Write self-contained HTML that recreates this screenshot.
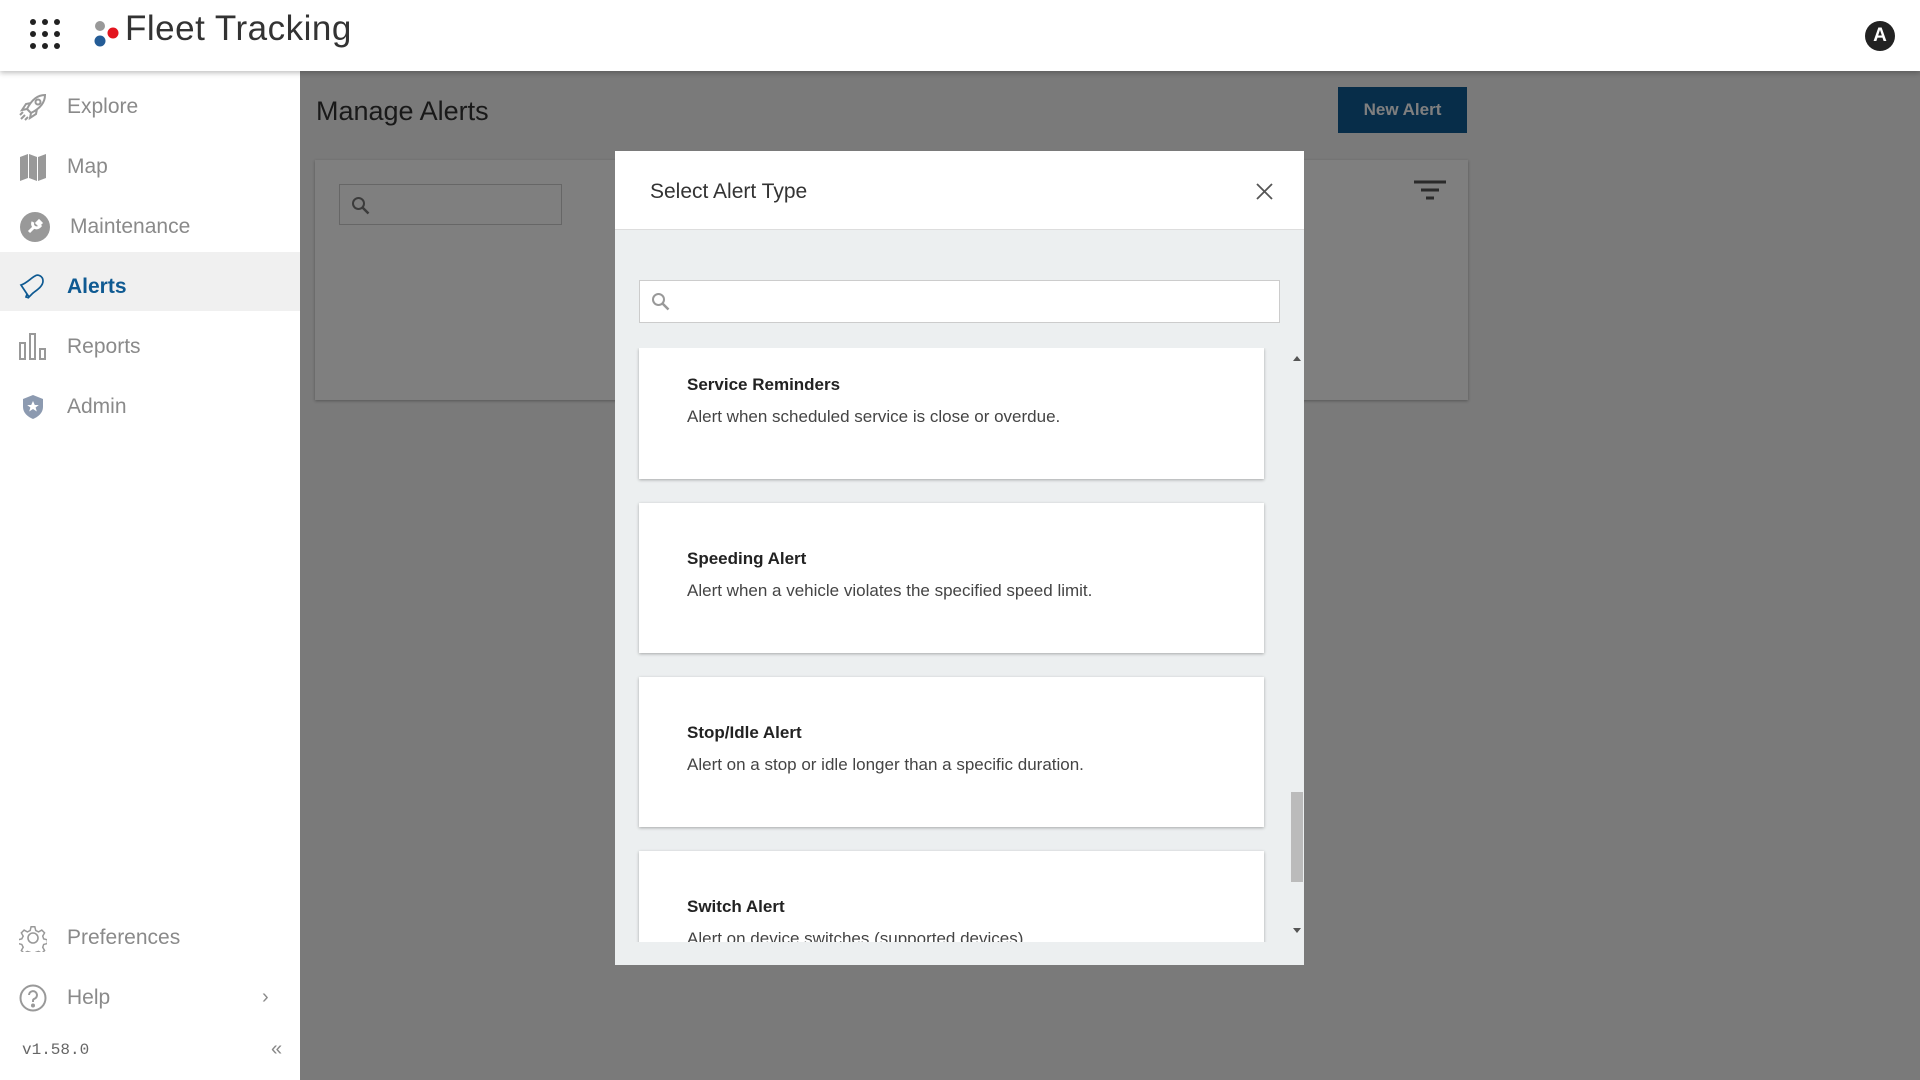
<!DOCTYPE html>
<html><head><meta charset="utf-8"><style>
*{box-sizing:border-box;margin:0;padding:0}
body{width:1920px;height:1080px;overflow:hidden;font-family:"Liberation Sans",sans-serif;background:#fff;position:relative}
.hdr{position:absolute;left:0;top:0;width:1920px;height:71px;background:#fff;z-index:3;box-shadow:0 2px 5px rgba(0,0,0,.25)}
.side{position:absolute;left:0;top:71px;width:300px;height:1009px;background:#fff;z-index:2}
.nav{position:absolute;left:0;width:300px;height:59px;display:flex;align-items:center;font-size:21px;color:#8a8a8a}
.nav svg{position:absolute;left:19px}
.nav span{position:absolute;left:67px}
.main{position:absolute;left:300px;top:71px;width:1620px;height:1009px;background:#f4f4f4}
.ov{position:absolute;left:300px;top:71px;width:1620px;height:1009px;background:rgba(0,0,0,.5)}
.modal{position:absolute;left:615px;top:151px;width:689px;height:814px;background:#eceff0}
.card{position:absolute;left:24px;width:625px;background:#fff;box-shadow:0 1px 3px rgba(0,0,0,.3)}
.card b{position:absolute;left:48px;font-size:17px;font-weight:bold;color:#222}
.card i{position:absolute;left:48px;font-style:normal;font-size:17px;color:#444}
</style></head><body>
<div class="hdr">
 <svg style="position:absolute;left:30px;top:19px" width="30" height="30"><g fill="#222"><circle cx="3" cy="3" r="3"/><circle cx="15" cy="3" r="3"/><circle cx="27" cy="3" r="3"/><circle cx="3" cy="15" r="3"/><circle cx="15" cy="15" r="3"/><circle cx="27" cy="15" r="3"/><circle cx="3" cy="27" r="3"/><circle cx="15" cy="27" r="3"/><circle cx="27" cy="27" r="3"/></g></svg>
 <svg style="position:absolute;left:94px;top:20px" width="26" height="28"><circle cx="6" cy="6" r="5" fill="#999"/><circle cx="6" cy="21" r="5.5" fill="#245c96"/><circle cx="19" cy="13" r="5.5" fill="#e3141e"/></svg>
 <div style="position:absolute;left:125px;top:9px;font-size:35px;color:#333;letter-spacing:.5px">Fleet Tracking</div>
 <div style="position:absolute;left:1865px;top:21px;width:30px;height:30px;border-radius:50%;background:#222;color:#fff;font-weight:bold;font-size:19px;text-align:center;line-height:30px">A</div>
</div>
<div class="side">
 <div class="nav" style="top:6px"><svg width="28" height="28" viewBox="0 0 28 28" fill="none" stroke="#999" stroke-width="2"><path d="M26 2C18 2 12 8 8 16l4 4c8-4 14-10 14-18zM8 16l-5 1 4-6 5-1M12 20l-1 5 6-4 1-5M6 22l-4 4M9 24l-3 3M4 19l-3 3"/><circle cx="19" cy="9" r="2.5"/></svg><span>Explore</span></div>
 <div class="nav" style="top:66px"><svg width="28" height="28" viewBox="0 0 28 28" fill="#999"><path d="M1 4l8-3v24l-8 3zM10 1l8 3v24l-8-3zM19 4l8-3v24l-8 3z"/></svg><span>Map</span></div>
 <div class="nav" style="top:126px"><svg width="32" height="32" viewBox="0 0 32 32"><circle cx="16" cy="16" r="15" fill="#999"/><path d="M10 21l6-6M14 11a4 4 0 0 0 6 5l1-1-3-3 2-2 3 3" stroke="#fff" stroke-width="3" fill="none"/></svg><span style="left:70px">Maintenance</span></div>
 <div class="nav" style="top:181px;background:#f0f0f0;color:#0f5a92;font-weight:bold;padding-top:10px"><svg width="28" height="28" viewBox="0 0 28 28" fill="none" stroke="#0f5a92" stroke-width="1.7"><path d="M2 12L10 24 13 21C16 18 24 14 24 8 24 3 19 1 16 3 12 5 8 10 2 12zM8 21l-1 3 3 1"/></svg><span>Alerts</span></div>
 <div class="nav" style="top:246px"><svg width="28" height="28" viewBox="0 0 28 28" fill="none" stroke="#999" stroke-width="2"><rect x="1" y="10" width="5" height="16"/><rect x="11" y="1" width="5" height="25"/><rect x="21" y="16" width="5" height="10"/></svg><span>Reports</span></div>
 <div class="nav" style="top:306px"><svg width="28" height="28" viewBox="0 0 28 28"><path d="M14 2l10 4v8c0 6-5 10-10 12C9 24 4 20 4 14V6z" fill="#8c9ab0"/><path d="M14 8l1.8 4h4l-3.2 2.5 1.2 4L14 16l-3.8 2.5 1.2-4L8.2 12h4z" fill="#fff"/></svg><span>Admin</span></div>
 <div class="nav" style="top:837px"><svg width="28" height="28" viewBox="0 0 28 28" fill="none" stroke="#999" stroke-width="1.6"><circle cx="14" cy="14" r="5"/><path d="M12 2h4l1 4 3 1.5 3.5-2 3 3-2 3.5 1 3 4 1v4l-4 1-1 3 2 3.5-3 3-3.5-2-3 1-1 4h-4l-1-4-3-1-3.5 2-3-3 2-3.5-1.5-3-4-1v-4l4-1 1.5-3-2-3.5 3-3 3.5 2 3-1.5z" transform="scale(.93) translate(1 1)"/></svg><span>Preferences</span></div>
 <div class="nav" style="top:897px"><svg width="28" height="28" viewBox="0 0 28 28" fill="none" stroke="#999" stroke-width="2"><circle cx="14" cy="14" r="12.5"/><path d="M10 11a4 4 0 1 1 5 4c-1 .5-1 1-1 3"/><circle cx="14" cy="21.5" r="1" fill="#999"/></svg><span>Help</span><span style="left:262px;font-size:20px">›</span></div>
 <div style="position:absolute;left:22px;top:970px;font-family:'Liberation Mono',monospace;font-size:16px;color:#666">v1.58.0</div>
 <div style="position:absolute;left:271px;top:967px;font-size:20px;color:#888">«</div>
</div>
<div class="main">
 <div style="position:absolute;left:16px;top:25px;font-size:27px;color:#333">Manage Alerts</div>
 <div style="position:absolute;left:1038px;top:16px;width:129px;height:46px;background:#0f5a92;color:#fff;font-weight:bold;font-size:17px;text-align:center;line-height:46px">New Alert</div>
 <div style="position:absolute;left:15px;top:89px;width:1153px;height:240px;background:#fff;box-shadow:0 1px 3px rgba(0,0,0,.3)">
  <div style="position:absolute;left:24px;top:24px;width:223px;height:41px;border:1px solid #ccc">
   <svg style="position:absolute;left:11px;top:11px" width="20" height="20"><circle cx="7.5" cy="7.5" r="5.5" stroke="#777" stroke-width="2" fill="none"/><path d="M11.5 11.5l6 6" stroke="#777" stroke-width="2.5"/></svg>
  </div>
  <svg style="position:absolute;left:1099px;top:20px" width="32" height="22"><path d="M0 2h32M7 10h18M12 18h8" stroke="#555" stroke-width="3"/></svg>
 </div>
</div>
<div class="ov"></div>
<div class="modal">
 <div style="position:absolute;left:0;top:0;width:689px;height:79px;background:#fff;border-bottom:1px solid #ddd">
  <div style="position:absolute;left:35px;top:29px;font-size:21px;color:#333">Select Alert Type</div>
  <svg style="position:absolute;left:641px;top:32px" width="17" height="17"><path d="M1 1l15 15M16 1L1 16" stroke="#555" stroke-width="1.8"/></svg>
 </div>
 <div style="position:absolute;left:24px;top:129px;width:641px;height:43px;background:#fff;border:1px solid #ccc">
  <svg style="position:absolute;left:11px;top:11px" width="20" height="20"><circle cx="7.5" cy="7.5" r="5.5" stroke="#999" stroke-width="2" fill="none"/><path d="M11.5 11.5l6 6" stroke="#999" stroke-width="2.5"/></svg>
 </div>
 <div style="position:absolute;left:0;top:197px;width:689px;height:594px;overflow:hidden">
  <div class="card" style="top:0;height:131px"><b style="top:27px">Service Reminders</b><i style="top:59px">Alert when scheduled service is close or overdue.</i></div>
  <div class="card" style="top:155px;height:150px"><b style="top:46px">Speeding Alert</b><i style="top:78px">Alert when a vehicle violates the specified speed limit.</i></div>
  <div class="card" style="top:329px;height:150px"><b style="top:46px">Stop/Idle Alert</b><i style="top:78px">Alert on a stop or idle longer than a specific duration.</i></div>
  <div class="card" style="top:503px;height:150px"><b style="top:46px">Switch Alert</b><i style="top:78px">Alert on device switches (supported devices).</i></div>
  <div style="position:absolute;left:674px;top:0;width:15px;height:594px;background:#eceff0"></div>
  <div style="position:absolute;left:676px;top:444px;width:12px;height:90px;background:#bbb"></div>
  <div style="position:absolute;left:678px;top:8px;border:4px solid transparent;border-bottom:5px solid #555;border-top:0"></div>
  <div style="position:absolute;left:678px;top:580px;border:4px solid transparent;border-top:5px solid #555;border-bottom:0"></div>
 </div>
</div>
</body></html>
